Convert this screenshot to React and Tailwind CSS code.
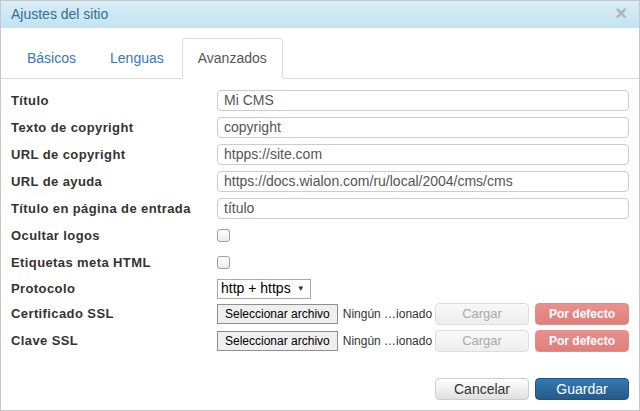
import { useState } from 'react';

const TEXT_FIELDS = [
  { label: 'Título', value: 'Mi CMS' },
  { label: 'Texto de copyright', value: 'copyright' },
  { label: 'URL de copyright', value: 'htpps://site.com' },
  { label: 'URL de ayuda', value: 'https://docs.wialon.com/ru/local/2004/cms/cms' },
  { label: 'Título en página de entrada', value: 'título' },
];

const TABS = ['Básicos', 'Lenguas', 'Avanzados'];

export default function App() {
  const [tab, setTab] = useState('Avanzados');

  return (
    <div
      className="w-[640px] h-[411px] bg-white border border-[#c8c8c8] flex flex-col overflow-hidden"
      style={{ fontFamily: '"Liberation Sans", Arial, sans-serif' }}
    >
      {/* Header */}
      <div className="h-[27px] shrink-0 flex items-center justify-between pl-[10px] pr-[12px] bg-gradient-to-b from-[#d9edf7] to-[#c4e3f3] border-b border-[#bce8f1]">
        <span className="text-[14px] text-[#31708f]">Ajustes del sitio</span>
        <span className="text-[20px] leading-none font-bold text-[#a8b4ba] -mt-[2px]">×</span>
      </div>

      {/* Tabs */}
      <div className="pt-[10px] px-[10px] shrink-0">
        <div className="flex border-b border-[#ddd] -mx-[10px] px-[10px]">
          {TABS.map((t) => (
            <button
              key={t}
              onClick={() => setTab(t)}
              className={`mr-[2px] -mb-px h-[41px] px-[15px] text-[14px] rounded-t-[4px] border ${
                tab === t
                  ? 'text-[#555] bg-white border-[#ddd] border-b-white'
                  : 'text-[#337ab7] border-transparent'
              }`}
            >
              {t}
            </button>
          ))}
        </div>
      </div>

      {/* Form */}
      <div className="pt-[11px] pl-[10px] pr-[10px] flex flex-col gap-[6px]">
        {TEXT_FIELDS.map((f) => (
          <Row key={f.label} label={f.label}>
            <div className="w-full h-[21px] border border-[#ccc] rounded-[4px] px-[6px] flex items-center text-[14px] text-[#555]">
              {f.value}
            </div>
          </Row>
        ))}
        <Row label="Ocultar logos">
          <Checkbox />
        </Row>
        <Row label="Etiquetas meta HTML">
          <Checkbox />
        </Row>
        <Row label="Protocolo" h="h-[18px]">
          <div className="h-[20px] mt-[1px] border border-[#a9a9a9] px-[3px] flex items-center gap-[6px] text-[14px] text-black">
            http + https
            <span className="text-[8px] text-[#333] mr-[2px]">▼</span>
          </div>
        </Row>
        <FileRow label="Certificado SSL" />
        <FileRow label="Clave SSL" />
      </div>

      {/* Footer */}
      <div className="mt-auto pb-[10px] pr-[10px] flex justify-end gap-[6px]">
        <button className="w-[94px] h-[22px] rounded-[4px] border border-[#ccc] bg-gradient-to-b from-white to-[#e0e0e0] text-[14px] text-[#333]">
          Cancelar
        </button>
        <button className="w-[94px] h-[22px] rounded-[4px] border border-[#245580] bg-gradient-to-b from-[#337ab7] to-[#265a88] text-[14px] text-white">
          Guardar
        </button>
      </div>
    </div>
  );
}

function Row({ label, children, h = 'h-[21px]' }) {
  return (
    <div className={`flex items-center ${h}`}>
      <div className="w-[206px] shrink-0 pt-[1px] text-[13px] font-bold text-[#333] tracking-[0.4px]">{label}</div>
      <div className="flex-1 min-w-0 flex items-center">{children}</div>
    </div>
  );
}

function Checkbox() {
  return <div className="w-[13px] h-[13px] border border-[#a0a0a0] rounded-[3px] bg-gradient-to-b from-white to-[#ececec]" />;
}

function FileRow({ label }) {
  return (
    <Row label={label}>
      <div className="flex items-center w-full">
        <div className="h-[20px] px-[7px] border border-[#8f8f8f] bg-[#efefef] text-[12px] text-black flex items-center whitespace-nowrap">
          Seleccionar archivo
        </div>
        <span className="ml-[5px] text-[12px] text-[#333] whitespace-nowrap">Ningún …ionado</span>
        <div className="ml-auto flex gap-[6px]">
          <div className="w-[94px] h-[22px] rounded-[4px] border border-[#ddd] bg-gradient-to-b from-[#f8f8f8] to-[#eeeeee] text-[13px] text-[#aaa] flex items-center justify-center">
            Cargar
          </div>
          <div className="w-[94px] h-[22px] rounded-[4px] border border-[#e08e8b] bg-gradient-to-b from-[#e8918e] to-[#df7f7c] text-[12px] font-bold text-white flex items-center justify-center">
            Por defecto
          </div>
        </div>
      </div>
    </Row>
  );
}
